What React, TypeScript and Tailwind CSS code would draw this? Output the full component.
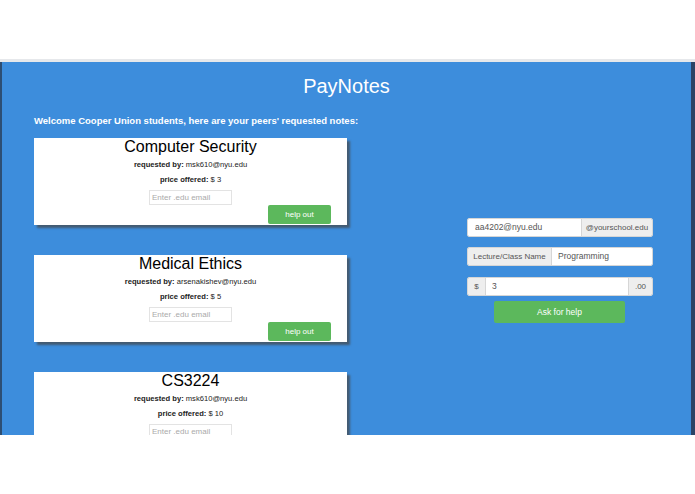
const requests = [
  { id: 1, course: "Computer Security", by: "msk610@nyu.edu", price: 3 },
  { id: 2, course: "Medical Ethics", by: "arsenakishev@nyu.edu", price: 5 },
  { id: 3, course: "CS3224", by: "msk610@nyu.edu", price: 10 },
];

function RequestCard({ course, by, price }: { course: string; by: string; price: number }) {
  return (
    <div className="w-[313px] h-[87px] mb-[30px] shrink-0 bg-white shadow-[3px_3px_2px_rgba(70,70,70,0.7)] flex flex-col items-center">
      <h3 className="text-[16px] leading-[18px] text-black">{course}</h3>
      <p className="mt-[3px] text-[7.6px] leading-[12px] text-[#222]">
        <span className="font-bold">requested by:</span> {by}
      </p>
      <p className="mt-[3px] text-[7.6px] leading-[12px] text-[#222]">
        <span className="font-bold">price offered:</span> $ {price}
      </p>
      <input
        placeholder="Enter .edu email"
        className="mt-[4px] w-[83px] h-[15px] border border-[#e3e3e3] px-[2px] text-[8px] placeholder:text-[#aaa] outline-none"
      />
      <div className="w-full flex justify-end pr-[16px] mt-auto mb-[1px]">
        <button className="w-[63px] h-[19px] rounded-[2px] bg-[#5cb85c] text-white text-[8px]">help out</button>
      </div>
    </div>
  );
}

export default function App() {
  return (
    <div className="w-[695px] h-[494px] bg-white overflow-hidden font-['Liberation_Sans',Arial,sans-serif]">
      <div className="h-[59px] bg-white" />
      <div className="h-[3px] bg-[#e6e8eb]" />

      <div className="h-[373px] flex bg-[#3d8ddc] overflow-hidden">
        <div className="w-[2px] bg-[#2d4e73]" />
        <main className="flex-1 flex flex-col">
          <h1 className="pt-[12px] text-center text-[20px] leading-[24px] text-white">PayNotes</h1>
          <p className="mt-[16px] pl-[32px] text-[9.5px] leading-[14px] font-bold text-white">
            Welcome Cooper Union students, here are your peers' requested notes:
          </p>

          <div className="mt-[10px] flex">
            {/* open requests */}
            <div className="pl-[32px] flex flex-col">
              {requests.map((r) => (
                <RequestCard key={r.id} course={r.course} by={r.by} price={r.price} />
              ))}
            </div>

            {/* new request form */}
            <form className="ml-[120px] mt-[80px] w-[186px] flex flex-col text-[8px] text-[#555]">
              <div className="flex h-[19px] rounded-[2px] overflow-hidden border border-[#d6d6d6]">
                <input
                  defaultValue="aa4202@nyu.edu"
                  className="w-[113px] bg-white px-[7px] text-[8.5px] text-[#555] outline-none"
                />
                <span className="flex-1 bg-[#eeeeee] border-l border-[#d6d6d6] flex items-center justify-center">
                  @yourschool.edu
                </span>
              </div>
              <div className="mt-[10px] flex h-[19px] rounded-[2px] overflow-hidden border border-[#d6d6d6]">
                <span className="w-[84px] bg-[#eeeeee] border-r border-[#d6d6d6] flex items-center justify-center">
                  Lecture/Class Name
                </span>
                <input
                  defaultValue="Programming"
                  className="flex-1 min-w-0 bg-white px-[6px] text-[8.5px] text-[#555] outline-none"
                />
              </div>
              <div className="mt-[11px] flex h-[19px] rounded-[2px] overflow-hidden border border-[#d6d6d6]">
                <span className="w-[18px] bg-[#eeeeee] border-r border-[#d6d6d6] flex items-center justify-center">$</span>
                <input defaultValue="3" className="flex-1 min-w-0 bg-white px-[6px] text-[8.5px] text-[#555] outline-none" />
                <span className="w-[24px] bg-[#eeeeee] border-l border-[#d6d6d6] flex items-center justify-center">.00</span>
              </div>
              <button
                type="button"
                className="mt-[5px] ml-[27px] w-[131px] h-[22px] rounded-[2px] bg-[#5cb85c] text-white text-[8.5px]"
              >
                Ask for help
              </button>
            </form>
          </div>
        </main>
        <div className="w-[4px] bg-[#2b4466]" />
      </div>
    </div>
  );
}
